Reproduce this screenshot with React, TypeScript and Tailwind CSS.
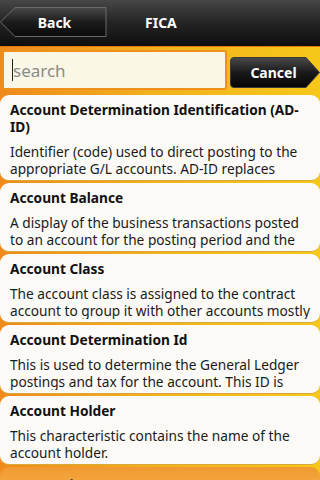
import React from 'react';

const items = [
  {
    title: 'Account Determination Identification (AD-ID)',
    desc: 'Identifier (code) used to direct posting to the appropriate G/L accounts. AD-ID replaces account',
  },
  {
    title: 'Account Balance',
    desc: 'A display of the business transactions posted to an account for the posting period and the',
  },
  {
    title: 'Account Class',
    desc: 'The account class is assigned to the contract account to group it with other accounts mostly according',
  },
  {
    title: 'Account Determination Id',
    desc: 'This is used to determine the General Ledger postings and tax for the account. This ID is',
  },
  {
    title: 'Account Holder',
    desc: 'This characteristic contains the name of the account holder.',
  },
];

const BackShape = () => (
  <svg className="absolute inset-0" width="107" height="30" viewBox="0 0 107 30">
    <defs>
      <linearGradient id="bk" x1="0" y1="0" x2="0" y2="1">
        <stop offset="0" stopColor="#4a4a4a" />
        <stop offset="0.5" stopColor="#1c1c1c" />
        <stop offset="1" stopColor="#0a0a0a" />
      </linearGradient>
    </defs>
    <polygon points="0.5,15 15,0.5 106,0.5 106,29.5 15,29.5" fill="url(#bk)" stroke="#6a6a6a" strokeWidth="1" />
  </svg>
);

const CancelShape = () => (
  <svg className="absolute inset-0" width="90" height="31" viewBox="0 0 90 31">
    <defs>
      <linearGradient id="cn" x1="0" y1="0" x2="0" y2="1">
        <stop offset="0" stopColor="#4a4a4a" />
        <stop offset="0.5" stopColor="#1a1a1a" />
        <stop offset="1" stopColor="#050505" />
      </linearGradient>
    </defs>
    <path d="M4,0.5 L76,0.5 L89.5,15.5 L76,30.5 L4,30.5 Q0.5,30.5 0.5,27 L0.5,4 Q0.5,0.5 4,0.5 Z" fill="url(#cn)" stroke="#3a3a3a" strokeWidth="1" />
  </svg>
);

export default function App() {
  return (
    <div
      className="w-[320px] h-[480px] overflow-hidden flex flex-col bg-gradient-to-r from-[#ef8a1c] via-[#f2b21c] to-[#f6c81a]"
      style={{ fontFamily: '"Noto Sans", "DejaVu Sans", sans-serif' }}
    >
      <div className="h-[47px] shrink-0 flex items-center bg-gradient-to-b from-[#474747] via-[#242424] to-[#0e0e0e] border-b border-[#e07a10]">
        <button className="relative w-[107px] h-[30px] mt-[-2px] flex items-center justify-center">
          <BackShape />
          <span className="relative text-white font-bold text-[14px] pl-[2px]">Back</span>
        </button>
        <div className="ml-[38px] mt-[-2px] text-white font-bold text-[14px]">FICA</div>
      </div>

      <div className="h-[48px] shrink-0 flex items-start pt-[3px] pl-[2px] gap-[3px]">
        <div className="w-[225px] h-[40px] border-2 border-[#f0901c] bg-[#fbf7e6] rounded-[3px] flex items-center pl-[8px]">
          <div className="w-px h-[22px] bg-[#222]" />
          <span className="text-[17px] text-[#8a8a88] leading-none">search</span>
        </div>
        <button className="relative w-[90px] h-[31px] mt-[7px] flex items-center justify-center">
          <CancelShape />
          <span className="relative text-white font-bold text-[14px] pr-[3px]">Cancel</span>
        </button>
      </div>

      <div className="flex flex-col gap-[2px]">
        {items.map((it) => (
          <div
            key={it.title}
            className="bg-[#fbfaf7] rounded-[9px] pl-[10px] pr-[8px] pt-[6px] pb-[3px] border-b border-[#d9a83a] text-[#111]"
          >
            <div className="font-bold text-[13.7px] leading-[17px]">{it.title}</div>
            <div className="mt-[8px] text-[13.7px] leading-[17px] h-[34px] overflow-hidden text-[#1a1a1a]">
              {it.desc}
            </div>
          </div>
        ))}
        <div className="bg-gradient-to-b from-[#f09a30] to-[#f7b24a] rounded-[9px] px-[10px] pt-[9px] h-[30px] text-[#333]">
          <div className="font-bold text-[13.7px] leading-[17px]">Account in Legacy</div>
        </div>
      </div>
    </div>
  );
}
